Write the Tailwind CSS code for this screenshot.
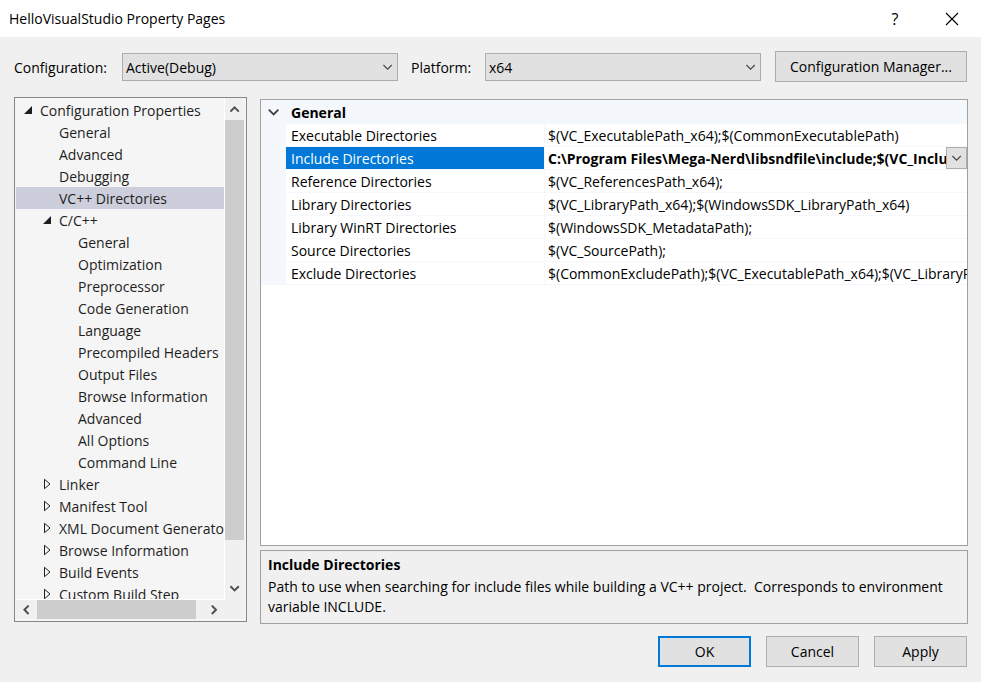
<!DOCTYPE html>
<html lang="en">
<head>
<meta charset="utf-8">
<title>HelloVisualStudio Property Pages</title>
<script src="https://cdn.jsdelivr.net/npm/@tailwindcss/browser@4"></script>
</head>
<body class="flex h-screen flex-col overflow-hidden bg-[#f0f0f0] font-['Open_Sans','Noto_Sans',sans-serif] text-[14px] leading-[20px] text-black">
  <header class="flex h-[37px] shrink-0 items-center bg-white pl-[9px]">
    <h1 class="flex-1">HelloVisualStudio Property Pages</h1>
    <button type="button" aria-label="Help" class="grid h-full w-[56px] place-items-center text-[16px]">?</button>
    <button type="button" aria-label="Close" class="grid h-full w-[58px] place-items-center">
      <svg width="14" height="14" viewBox="0 0 14 14" fill="none" stroke="#000" stroke-width="1.1"><path d="M1 1l12 12M13 1L1 13"/></svg>
    </button>
  </header>

  <form class="flex min-h-0 flex-1 flex-col px-[14px] pt-[14px] pb-[15px]">
    <div class="flex shrink-0 items-center">
      <label for="configuration" class="w-[108px] pt-[2px]">Configuration:</label>
      <div class="relative flex-1">
        <select id="configuration" class="block h-[28px] w-full appearance-none border border-[#adadad] bg-[#e1e1e1] px-[3px] pt-[2px]"><option>Active(Debug)</option></select>
        <svg class="pointer-events-none absolute top-[11px] right-[5px]" width="10" height="7" viewBox="0 0 10 7" fill="none" stroke="#444" stroke-width="1.1"><path d="M.4 1L4.6 5.2 8.8 1"/></svg>
      </div>
      <label for="platform" class="w-[87px] pt-[2px] pl-[13px]">Platform:</label>
      <div class="relative flex-1">
        <select id="platform" class="block h-[28px] w-full appearance-none border border-[#adadad] bg-[#e1e1e1] px-[3px] pt-[2px]"><option>x64</option></select>
        <svg class="pointer-events-none absolute top-[11px] right-[5px]" width="10" height="7" viewBox="0 0 10 7" fill="none" stroke="#444" stroke-width="1.1"><path d="M.4 1L4.6 5.2 8.8 1"/></svg>
      </div>
      <button type="button" class="ml-[14px] h-[31px] w-[192px] border border-[#adadad] bg-[#e1e1e1]">Configuration Manager...</button>
    </div>

    <div class="flex min-h-0 flex-1 gap-[13px] pt-[15px]">
      <nav aria-label="Property categories" class="mb-[2px] grid w-[233px] shrink-0 grid-cols-[minmax(0,1fr)_19px] grid-rows-[minmax(0,1fr)_19px] border border-[#828790] bg-[#f5f5f5] pr-[2px] pb-[2px] pl-px">
        <ul role="tree" class="overflow-hidden border-r border-b border-white pt-px leading-[20px] whitespace-nowrap text-[#1e1e1e]">
          <li role="treeitem" aria-expanded="true" class="flex items-center pt-[2px] pl-[8px]"><svg class="mr-[8px] mb-[2px] shrink-0" width="8" height="8" viewBox="0 0 8 8"><path d="M0 8L8 0V8Z" fill="#1e1e1e"/></svg>Configuration Properties</li>
          <li role="treeitem" class="pt-[2px] pl-[43px]">General</li>
          <li role="treeitem" class="pt-[2px] pl-[43px]">Advanced</li>
          <li role="treeitem" class="pt-[2px] pl-[43px]">Debugging</li>
          <li role="treeitem" aria-selected="true" class="bg-[#cccedb] pt-[2px] pl-[43px]">VC++ Directories</li>
          <li role="treeitem" aria-expanded="true" class="flex items-center pt-[2px] pl-[27px]"><svg class="mr-[8px] mb-[2px] shrink-0" width="8" height="8" viewBox="0 0 8 8"><path d="M0 8L8 0V8Z" fill="#1e1e1e"/></svg>C/C++</li>
          <li role="treeitem" class="pt-[2px] pl-[62px]">General</li>
          <li role="treeitem" class="pt-[2px] pl-[62px]">Optimization</li>
          <li role="treeitem" class="pt-[2px] pl-[62px]">Preprocessor</li>
          <li role="treeitem" class="pt-[2px] pl-[62px]">Code Generation</li>
          <li role="treeitem" class="pt-[2px] pl-[62px]">Language</li>
          <li role="treeitem" class="pt-[2px] pl-[62px]">Precompiled Headers</li>
          <li role="treeitem" class="pt-[2px] pl-[62px]">Output Files</li>
          <li role="treeitem" class="pt-[2px] pl-[62px]">Browse Information</li>
          <li role="treeitem" class="pt-[2px] pl-[62px]">Advanced</li>
          <li role="treeitem" class="pt-[2px] pl-[62px]">All Options</li>
          <li role="treeitem" class="pt-[2px] pl-[62px]">Command Line</li>
          <li role="treeitem" aria-expanded="false" class="flex items-center pt-[2px] pl-[27px]"><svg class="mr-[8px] mb-[2px] shrink-0" width="8" height="12" viewBox="0 0 8 12"><path d="M1.5 1.3V10.7L7 6Z" fill="none" stroke="#1e1e1e"/></svg>Linker</li>
          <li role="treeitem" aria-expanded="false" class="flex items-center pt-[2px] pl-[27px]"><svg class="mr-[8px] mb-[2px] shrink-0" width="8" height="12" viewBox="0 0 8 12"><path d="M1.5 1.3V10.7L7 6Z" fill="none" stroke="#1e1e1e"/></svg>Manifest Tool</li>
          <li role="treeitem" aria-expanded="false" class="flex items-center pt-[2px] pl-[27px]"><svg class="mr-[8px] mb-[2px] shrink-0" width="8" height="12" viewBox="0 0 8 12"><path d="M1.5 1.3V10.7L7 6Z" fill="none" stroke="#1e1e1e"/></svg>XML Document Generator</li>
          <li role="treeitem" aria-expanded="false" class="flex items-center pt-[2px] pl-[27px]"><svg class="mr-[8px] mb-[2px] shrink-0" width="8" height="12" viewBox="0 0 8 12"><path d="M1.5 1.3V10.7L7 6Z" fill="none" stroke="#1e1e1e"/></svg>Browse Information</li>
          <li role="treeitem" aria-expanded="false" class="flex items-center pt-[2px] pl-[27px]"><svg class="mr-[8px] mb-[2px] shrink-0" width="8" height="12" viewBox="0 0 8 12"><path d="M1.5 1.3V10.7L7 6Z" fill="none" stroke="#1e1e1e"/></svg>Build Events</li>
          <li role="treeitem" aria-expanded="false" class="flex items-center pt-[2px] pl-[27px]"><svg class="mr-[8px] mb-[2px] shrink-0" width="8" height="12" viewBox="0 0 8 12"><path d="M1.5 1.3V10.7L7 6Z" fill="none" stroke="#1e1e1e"/></svg>Custom Build Step</li>
        </ul>
        <div class="flex flex-col bg-[#f0f0f0]">
          <button type="button" aria-label="Scroll up" class="grid h-[22px] place-items-center"><svg width="10" height="8" viewBox="0 0 10 8" fill="none" stroke="#505050" stroke-width="2"><path d="M.4 6.6L4.6 2.4 8.8 6.6"/></svg></button>
          <div class="flex flex-1 flex-col"><div class="bg-[#cdcdcd]" style="height:91.8%"></div></div>
          <button type="button" aria-label="Scroll down" class="grid h-[22px] place-items-center"><svg width="10" height="8" viewBox="0 0 10 8" fill="none" stroke="#505050" stroke-width="2"><path d="M.4 1.2L4.6 5.4 8.8 1.2"/></svg></button>
        </div>
        <div class="flex bg-[#f0f0f0]">
          <button type="button" aria-label="Scroll left" class="grid w-[21px] place-items-center"><svg width="8" height="10" viewBox="0 0 8 10" fill="none" stroke="#505050" stroke-width="2"><path d="M5.6 .6L1.4 4.8 5.6 9"/></svg></button>
          <div class="flex flex-1"><div class="bg-[#cdcdcd]" style="width:95%"></div></div>
          <button type="button" aria-label="Scroll right" class="grid w-[21px] place-items-center"><svg width="8" height="10" viewBox="0 0 8 10" fill="none" stroke="#505050" stroke-width="2"><path d="M.8 .6L5 4.8 .8 9"/></svg></button>
        </div>
        <div class="bg-[#f0f0f0]"></div>
      </nav>

      <section class="-mr-px flex min-w-0 flex-1 flex-col gap-[4px] pt-[2px]">
        <div class="min-h-0 flex-1 overflow-hidden border border-[#a0a0a0] bg-white">
          <table class="w-full table-fixed border-separate border-spacing-0 text-left leading-[20px] whitespace-nowrap">
            <colgroup><col class="w-[25px]"><col class="w-[259px]"><col></colgroup>
            <thead>
              <tr class="h-[24px] bg-[#f4f7fc]">
                <td class="p-0"><button type="button" aria-label="Collapse General" class="grid h-[24px] w-full place-items-center"><svg width="12" height="8" viewBox="0 0 12 8" fill="none" stroke="#404040" stroke-width="1.8"><path d="M.8 1.6L5.6 6.4 10.4 1.6"/></svg></button></td>
                <th colspan="2" class="p-0 pt-[2px] pl-[5px] font-bold">General</th>
              </tr>
            </thead>
            <tbody>
              <tr><td class="bg-[#f4f7fc] p-0"></td><td class="border-r border-b border-[#f4f7fc] p-0 pt-[2px] pl-[5px]">Executable Directories</td><td class="overflow-hidden border-b border-[#f4f7fc] p-0 pt-[2px] pl-[3px]">$(VC_ExecutablePath_x64);$(CommonExecutablePath)</td></tr>
              <tr><td class="bg-[#f4f7fc] p-0"></td><td class="border-r border-b border-[#f4f7fc] bg-[#0078d7] bg-clip-padding p-0 pt-[2px] pl-[5px] text-white">Include Directories</td><td class="border-b border-[#f4f7fc] p-0 pl-[3px] font-bold"><div class="flex"><span class="min-w-0 flex-1 overflow-hidden pt-[2px]">C:\Program Files\Mega-Nerd\libsndfile\include;$(VC_IncludePath);</span><button type="button" aria-label="Edit Include Directories" class="grid h-[22px] w-[21px] shrink-0 place-items-center border border-[#adadad] bg-[#e1e1e1]"><svg width="10" height="7" viewBox="0 0 10 7" fill="none" stroke="#444" stroke-width="1.1"><path d="M.4 1L4.6 5.2 8.8 1"/></svg></button></div></td></tr>
              <tr><td class="bg-[#f4f7fc] p-0"></td><td class="border-r border-b border-[#f4f7fc] p-0 pt-[2px] pl-[5px]">Reference Directories</td><td class="overflow-hidden border-b border-[#f4f7fc] p-0 pt-[2px] pl-[3px]">$(VC_ReferencesPath_x64);</td></tr>
              <tr><td class="bg-[#f4f7fc] p-0"></td><td class="border-r border-b border-[#f4f7fc] p-0 pt-[2px] pl-[5px]">Library Directories</td><td class="overflow-hidden border-b border-[#f4f7fc] p-0 pt-[2px] pl-[3px]">$(VC_LibraryPath_x64);$(WindowsSDK_LibraryPath_x64)</td></tr>
              <tr><td class="bg-[#f4f7fc] p-0"></td><td class="border-r border-b border-[#f4f7fc] p-0 pt-[2px] pl-[5px]">Library WinRT Directories</td><td class="overflow-hidden border-b border-[#f4f7fc] p-0 pt-[2px] pl-[3px]">$(WindowsSDK_MetadataPath);</td></tr>
              <tr><td class="bg-[#f4f7fc] p-0"></td><td class="border-r border-b border-[#f4f7fc] p-0 pt-[2px] pl-[5px]">Source Directories</td><td class="overflow-hidden border-b border-[#f4f7fc] p-0 pt-[2px] pl-[3px]">$(VC_SourcePath);</td></tr>
              <tr><td class="bg-[#f4f7fc] p-0"></td><td class="border-r border-b border-[#f4f7fc] p-0 pt-[2px] pl-[5px]">Exclude Directories</td><td class="overflow-hidden border-b border-[#f4f7fc] p-0 pt-[2px] pl-[3px]">$(CommonExcludePath);$(VC_ExecutablePath_x64);$(VC_LibraryPath_x64)</td></tr>
            </tbody>
          </table>
        </div>
        <div class="h-[74px] shrink-0 border border-[#a0a0a0] px-[7px] pt-[4px]">
          <h2 class="mb-[2px] font-bold">Include Directories</h2>
          <p>Path to use when searching for include files while building a VC++ project.&nbsp; Corresponds to environment variable INCLUDE.</p>
        </div>
      </section>
    </div>

    <footer class="flex shrink-0 justify-end gap-[15px] pt-[12px]">
      <button type="button" class="h-[31px] w-[93px] border-2 border-[#0078d7] bg-[#e1e1e1]">OK</button>
      <button type="button" class="h-[31px] w-[93px] border border-[#adadad] bg-[#e1e1e1]">Cancel</button>
      <button type="button" class="h-[31px] w-[93px] border border-[#adadad] bg-[#e1e1e1]">Apply</button>
    </footer>
  </form>
</body>
</html>
